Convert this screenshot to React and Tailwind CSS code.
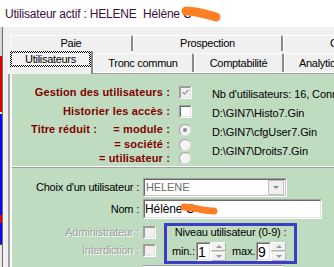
import React from "react";

function Check({ checked = false, disabled = false }) {
  return (
    <div className="w-[13px] h-[13px] shrink-0 flex border border-t-[#a0a0a0] border-l-[#a0a0a0] border-r-white border-b-white">
      <div
        className={
          disabled
            ? "flex-1 flex items-center justify-center border border-t-[#9a9a9a] border-l-[#9a9a9a] border-r-[#e3e3e3] border-b-[#e3e3e3] bg-[#f0f0f0]"
            : "flex-1 flex items-center justify-center border border-t-[#696969] border-l-[#696969] border-r-[#e3e3e3] border-b-[#e3e3e3] bg-white"
        }
      >
        {checked && (
          <svg width="7" height="7" viewBox="0 0 7 7">
            <path d="M0.5 3 L2.5 5 L6.5 1" stroke="#a0a0a0" strokeWidth="1.5" fill="none" />
          </svg>
        )}
      </div>
    </div>
  );
}

function Radio({ checked = false }) {
  return (
    <div className="w-[12px] h-[12px] shrink-0 rounded-full border border-t-[#a0a0a0] border-l-[#a0a0a0] border-r-[#e3e3e3] border-b-[#e3e3e3] bg-[#f4f4f4] flex items-center justify-center">
      {checked && <div className="w-[4px] h-[4px] rounded-full bg-[#8c8c8c]" />}
    </div>
  );
}

function SpinBtn({ up = false }) {
  return (
    <div className="h-[9px] bg-[#f0f0f0] border border-t-white border-l-white border-r-[#b4b4b4] border-b-[#b4b4b4] flex items-center justify-center">
      {up ? (
        <div className="w-0 h-0 border-l-[3px] border-r-[3px] border-b-[3px] border-l-transparent border-r-transparent border-b-[#9a9a9a]" />
      ) : (
        <div className="w-0 h-0 border-l-[3px] border-r-[3px] border-t-[3px] border-l-transparent border-r-transparent border-t-[#9a9a9a]" />
      )}
    </div>
  );
}

function Spin({ value }) {
  return (
    <div className="flex h-[19px] shrink-0">
      <div className="w-[15px] h-[19px] flex border border-t-[#a0a0a0] border-l-[#a0a0a0] border-r-white border-b-white">
        <div className="flex-1 flex items-center border border-t-[#696969] border-l-[#696969] border-r-[#e3e3e3] border-b-[#e3e3e3] bg-white text-[14px] leading-none text-black">
          {value}
        </div>
      </div>
      <div className="w-[15px] flex flex-col gap-[1px]">
        <SpinBtn up />
        <SpinBtn />
      </div>
    </div>
  );
}

function Tab({ children, className }) {
  return (
    <div
      className={
        "shrink-0 flex items-center bg-[#f0f0f0] border-t border-l border-t-white border-l-white border-r-2 border-r-[#8a8a8a] rounded-t-[2px] text-[11px] tracking-[-0.3px] text-black whitespace-nowrap " +
        className
      }
    >
      {children}
    </div>
  );
}

export default function App() {
  return (
    <div className="w-[334px] h-[267px] overflow-hidden bg-[#f0f0f0] flex flex-col font-['Liberation_Sans',Arial,sans-serif] text-[11px] leading-none text-black select-none">
      {/* title bar */}
      <div className="relative h-[27px] shrink-0 bg-white flex items-center pl-[5px] text-[12px] text-[#3c0f3c] tracking-[-0.2px] whitespace-nowrap">
        <span className="w-[138px] shrink-0">Utilisateur actif : HELENE</span>
        <span>Hélène C</span>
        <svg className="absolute left-[176px] top-[0px]" width="50" height="26" viewBox="0 0 50 26">
          <path d="M10 11 C 18 11, 30 14, 40 17" stroke="#ff7f27" strokeWidth="9" strokeLinecap="round" fill="none" />
        </svg>
      </div>

      <div className="flex-1 flex min-h-0">
        {/* strip of window behind */}
        <div className="w-[2px] shrink-0 flex flex-col">
          <div className="h-[29px] bg-[#d8d8d8]" />
          <div className="h-[56px] bg-[#e00000]" />
          <div className="h-[2px] bg-[#e0e0e0]" />
          <div className="h-[101px] bg-[#0a0af0]" />
          <div className="h-[8px] bg-[#e00000]" />
          <div className="h-[20px] bg-[#0a0af0]" />
          <div className="h-[2px] bg-[#404040]" />
          <div className="flex-1 bg-[#e8e8e8]" />
        </div>
        <div className="w-[1px] shrink-0 bg-[#707070]" />

        {/* main */}
        <div className="flex-1 min-w-0 flex flex-col overflow-hidden">
          <div className="h-[8px] shrink-0" />

          {/* tab row 1 */}
          <div className="h-[16px] shrink-0 flex pl-[7px]">
            <Tab className="w-[123px] h-[16px] justify-center">Paie</Tab>
            <Tab className="w-[150px] h-[16px] justify-center">Prospection</Tab>
            <Tab className="w-[100px] h-[16px] justify-start pl-[46px]">Contrôle</Tab>
          </div>

          {/* tab row 2 */}
          <div className="h-[21px] shrink-0 flex items-start pl-[5px]">
            <div className="relative z-10 w-[85px] h-[23px] shrink-0 bg-[#f0f0f0] border-l border-l-white border-r-2 border-r-[#8a8a8a] pl-[1px]">
              <div className="w-[81px] h-[16px] p-[2px] bg-[repeating-conic-gradient(#000_0%_25%,#fff_0%_50%)] bg-[length:2px_2px]">
                <div className="w-full h-full bg-[#f0f0f0] flex items-center justify-center text-[11px] tracking-[-0.3px] whitespace-nowrap">
                  Utilisateurs
                </div>
              </div>
            </div>
            <Tab className="mt-[2px] w-[101px] h-[19px] justify-center">Tronc commun</Tab>
            <Tab className="mt-[2px] w-[90px] h-[19px] justify-center">Comptabilité</Tab>
            <Tab className="mt-[2px] w-[90px] h-[19px] justify-start pl-[14px]">Analytique</Tab>
          </div>

          {/* tab page */}
          <div className="flex-1 min-h-0 ml-[5px] flex flex-col border-l-2 border-l-[#a0a0a0] border-t border-t-white">
            <div className="flex-1 min-h-0 flex flex-col border-l-2 border-l-white border-t border-t-[#a0a0a0]">
              <div className="flex-1 min-h-0 bg-[#c0dcc0] flex flex-col">
                {/* top section */}
                <div className="h-[92px] shrink-0 flex">
                  <div className="w-[180px] shrink-0 flex flex-col pt-[9px] text-[#800000] font-bold text-[11px] tracking-[0.15px] whitespace-nowrap">
                    <div className="h-[19px] flex items-center">
                      <span className="w-[158px] text-right">Gestion des utilisateurs :</span>
                      <div className="ml-[9px]"><Check checked disabled /></div>
                    </div>
                    <div className="h-[19px] flex items-center">
                      <span className="w-[158px] text-right">Historier les accès :</span>
                      <div className="ml-[9px]"><Check /></div>
                    </div>
                    <div className="h-[17px] flex items-center">
                      <div className="w-[158px] flex">
                        <span className="ml-[19px]">Titre réduit :</span>
                        <span className="flex-1 text-right">= module :</span>
                      </div>
                      <div className="ml-[9px]"><Radio checked /></div>
                    </div>
                    <div className="h-[13px] flex items-center">
                      <span className="w-[158px] text-right">= société :</span>
                      <div className="ml-[9px]"><Radio /></div>
                    </div>
                    <div className="h-[14px] flex items-center">
                      <span className="w-[158px] text-right">= utilisateur :</span>
                      <div className="ml-[9px]"><Radio /></div>
                    </div>
                  </div>
                  <div className="ml-[20px] flex flex-col pt-[11px] text-[11px] tracking-[-0.1px] whitespace-nowrap">
                    <div className="h-[19px] flex items-center">Nb d'utilisateurs: 16, Connectés: 3</div>
                    <div className="h-[19px] flex items-center">D:\GIN7\Histo7.Gin</div>
                    <div className="h-[19px] flex items-center">D:\GIN7\cfgUser7.Gin</div>
                    <div className="h-[19px] flex items-center">D:\GIN7\Droits7.Gin</div>
                  </div>
                </div>

                {/* separator */}
                <div className="h-[1px] shrink-0 bg-white" />
                <div className="h-[1px] shrink-0 bg-[#a0a0a0]" />

                {/* bottom section */}
                <div className="flex-1 flex flex-col pt-[10px] text-[11px] tracking-[-0.2px] whitespace-nowrap">
                  <div className="h-[19px] flex items-center">
                    <span className="w-[127px] text-right">Choix d'un utilisateur :</span>
                    <div className="ml-[4px] w-[144px] h-[19px] flex border border-t-[#a0a0a0] border-l-[#a0a0a0] border-r-white border-b-white">
                      <div className="flex-1 flex items-center border border-t-[#696969] border-l-[#696969] border-r-[#c8c8c8] border-b-[#c8c8c8] bg-white">
                        <span className="flex-1 pl-[1px] text-[#6d6d6d] tracking-[-0.1px]">HELENE</span>
                        <div className="w-[16px] h-[15px] mr-[1px] bg-[#f0f0f0] border border-[#c0c0c0] flex items-center justify-center">
                          <div className="w-0 h-0 border-l-[3px] border-r-[3px] border-t-[3px] border-l-transparent border-r-transparent border-t-[#8a8a8a]" />
                        </div>
                      </div>
                    </div>
                  </div>

                  <div className="mt-[2px] h-[20px] flex items-center">
                    <span className="w-[127px] text-right">Nom :</span>
                    <div className="relative ml-[4px] w-[179px] h-[20px] flex border border-t-[#a0a0a0] border-l-[#a0a0a0] border-r-white border-b-white">
                      <div className="flex-1 flex items-center border border-t-[#696969] border-l-[#696969] border-r-[#e3e3e3] border-b-[#e3e3e3] bg-white text-[12px] tracking-[-0.1px]">
                        Hélène C
                      </div>
                      <svg className="absolute left-[33px] top-[0px]" width="46" height="20" viewBox="0 0 46 20">
                        <path d="M7 7 C 15 7, 27 11, 37 11" stroke="#ff7f27" strokeWidth="7" strokeLinecap="round" fill="none" />
                      </svg>
                    </div>
                  </div>

                  <div className="mt-[4px] flex items-start">
                    <div className="w-[144px] shrink-0 flex flex-col text-[#a0a0a0] [text-shadow:1px_1px_0_#ffffff]">
                      <div className="h-[18px] flex items-center">
                        <span className="w-[127px] text-right">Administrateur :</span>
                        <div className="ml-[4px]"><Check disabled /></div>
                      </div>
                      <div className="h-[18px] flex items-center">
                        <span className="w-[127px] text-right">Interdiction :</span>
                        <div className="ml-[4px]"><Check disabled /></div>
                      </div>
                    </div>
                    <div className="ml-[8px] w-[133px] h-[41px] shrink-0 border-[3px] border-[#3c3cc4] flex flex-col">
                      <div className="h-[12px] flex items-center justify-center">Niveau utilisateur (0-9) :</div>
                      <div className="mt-[4px] h-[19px] flex items-center pl-[5px]">
                        <span className="w-[24px]">min.:</span>
                        <Spin value="1" />
                        <span className="ml-[6px] w-[24px]">max.:</span>
                        <Spin value="9" />
                      </div>
                    </div>
                  </div>

                  <div className="mt-[1px] ml-[131px] w-[140px] h-[2px] border-t border-t-[#a0a0a0] bg-white" />
                </div>
              </div>
            </div>
          </div>
        </div>
      </div>
    </div>
  );
}
